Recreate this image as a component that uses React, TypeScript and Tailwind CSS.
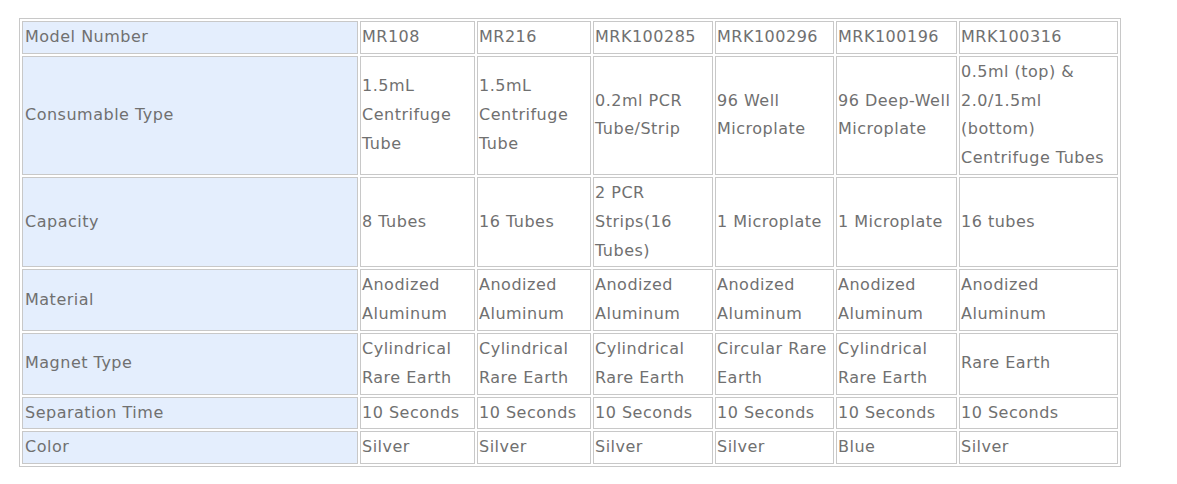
import React from 'react';

type Cell = string[];

interface Row {
  label: string;
  cells: Cell[];
}

const rows: Row[] = [
  {
    label: 'Model Number',
    cells: [['MR108'], ['MR216'], ['MRK100285'], ['MRK100296'], ['MRK100196'], ['MRK100316']],
  },
  {
    label: 'Consumable Type',
    cells: [
      ['1.5mL', 'Centrifuge', 'Tube'],
      ['1.5mL', 'Centrifuge', 'Tube'],
      ['0.2ml PCR', 'Tube/Strip'],
      ['96 Well', 'Microplate'],
      ['96 Deep-Well', 'Microplate'],
      ['0.5ml (top) &', '2.0/1.5ml', '(bottom)', 'Centrifuge Tubes'],
    ],
  },
  {
    label: 'Capacity',
    cells: [['8 Tubes'], ['16 Tubes'], ['2 PCR', 'Strips(16', 'Tubes)'], ['1 Microplate'], ['1 Microplate'], ['16 tubes']],
  },
  {
    label: 'Material',
    cells: [
      ['Anodized', 'Aluminum'],
      ['Anodized', 'Aluminum'],
      ['Anodized', 'Aluminum'],
      ['Anodized', 'Aluminum'],
      ['Anodized', 'Aluminum'],
      ['Anodized', 'Aluminum'],
    ],
  },
  {
    label: 'Magnet Type',
    cells: [
      ['Cylindrical', 'Rare Earth'],
      ['Cylindrical', 'Rare Earth'],
      ['Cylindrical', 'Rare Earth'],
      ['Circular Rare', 'Earth'],
      ['Cylindrical', 'Rare Earth'],
      ['Rare Earth'],
    ],
  },
  {
    label: 'Separation Time',
    cells: [['10 Seconds'], ['10 Seconds'], ['10 Seconds'], ['10 Seconds'], ['10 Seconds'], ['10 Seconds']],
  },
  {
    label: 'Color',
    cells: [['Silver'], ['Silver'], ['Silver'], ['Silver'], ['Blue'], ['Silver']],
  },
];

// column widths measured off the original table (border included)
const widths = ['w-[336px]', 'w-[115px]', 'w-[114px]', 'w-[120px]', 'w-[119px]', 'w-[121px]', 'w-[159px]'];

export default function App() {
  return (
    <div className="min-h-[484px] bg-white pl-[19px] pt-[18px] font-['DejaVu_Sans',sans-serif] text-[16px] leading-[28.8px] tracking-[0.5px] text-[#707070]">
      <table className="table-fixed w-[1102px] border border-[#c8c8c8] border-separate border-spacing-[2px]">
        <tbody>
          {rows.map((row, ri) => (
            <tr key={row.label}>
              <td className={`${ri === 0 ? widths[0] : ''} border border-[#c8c8c8] bg-[#e4eefd] px-[2px] py-px align-middle`}>
                {row.label}
              </td>
              {row.cells.map((lines, ci) => (
                <td
                  key={ci}
                  className={`${ri === 0 ? widths[ci + 1] : ''} border border-[#c8c8c8] px-px py-px align-middle whitespace-nowrap`}
                >
                  {lines.map((l, li) => (
                    <div key={li}>{l}</div>
                  ))}
                </td>
              ))}
            </tr>
          ))}
        </tbody>
      </table>
    </div>
  );
}
